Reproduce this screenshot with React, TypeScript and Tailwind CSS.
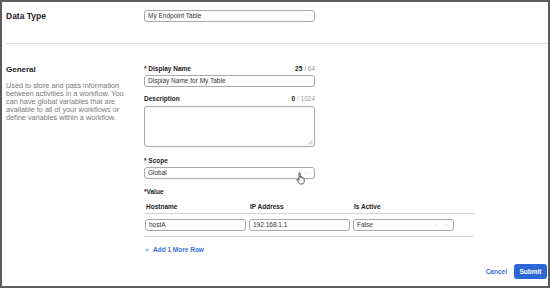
import { ChevronDown, X, Plus } from 'lucide-react';

const font = { fontFamily: '"Liberation Sans", Arial, sans-serif' };

function Label({ text, count }: { text: string; count?: [string, string] }) {
  return (
    <div className="flex h-[8px] w-[171px] items-center justify-between text-[6.5px] leading-[8px]">
      <span className="font-bold text-[#222]">{text}</span>
      {count && (
        <span className="text-[#999]">
          <span className="font-bold text-[#222]">{count[0]}</span> / {count[1]}
        </span>
      )}
    </div>
  );
}

function Select({ value, clear, className }: { value: string; clear?: boolean; className: string }) {
  return (
    <div
      className={`flex items-center justify-between rounded-[3px] border border-[#a9a9a9] bg-white pl-[3px] pr-[4px] text-[6.5px] text-[#333] ${className}`}
    >
      <span>{value}</span>
      <span className="flex items-center gap-[4px] text-[#c4c4c4]">
        {clear && <X size={5} strokeWidth={2} />}
        <ChevronDown size={6} strokeWidth={2} />
      </span>
    </div>
  );
}

function Field({ value, className }: { value: string; className: string }) {
  return (
    <div
      className={`flex items-center rounded-[3px] border border-[#a9a9a9] bg-white pl-[3px] text-[6.5px] text-[#333] ${className}`}
    >
      {value}
    </div>
  );
}

export default function App() {
  return (
    <div style={font} className="relative flex h-[288px] w-[550px] flex-col border-2 border-[#5c5c5c] bg-white">
      {/* Data type */}
      <div className="mt-[8px] flex h-[12px] items-center">
        <div className="w-[142px] pl-[4px] text-[8.5px] font-bold text-[#222]">Data Type</div>
        <Select value="My Endpoint Table" className="h-[12px] w-[171px]" />
      </div>

      <div className="ml-[4px] mt-[21px] h-px bg-[#d9d9d9]" />

      {/* General */}
      <div className="mt-[21px] flex">
        <div className="w-[142px] pl-[4px]">
          <div className="h-[10px] text-[8px] font-bold leading-[10px] text-[#222]">General</div>
          <p className="mt-[7px] w-[128px] text-[7.3px] leading-[8px] text-[#7a7a7a]">
            Used to store and pass information between activities in a workflow. You can have global variables that are available to all of your workflows or define variables within a workflow.
          </p>
        </div>

        <div className="flex flex-col">
          <Label text="* Display Name" count={['25', '64']} />
          <Field value="Display Name for My Table" className="mt-[2px] h-[12px] w-[171px]" />

          <div className="mt-[8px]">
            <Label text="Description" count={['0', '1024']} />
          </div>
          <div className="relative mt-[3px] h-[41px] w-[171px] rounded-[3px] border border-[#a9a9a9]">
            <svg className="absolute bottom-[1px] right-[1px]" width="6" height="6" viewBox="0 0 6 6">
              <path d="M5.5 1 L1 5.5 M5.5 3.5 L3.5 5.5" stroke="#999" strokeWidth="0.8" />
            </svg>
          </div>

          <div className="mt-[10px]">
            <Label text="* Scope" />
          </div>
          <Select value="Global" className="mt-[2px] h-[12px] w-[171px]" />

          <div className="mt-[9px] text-[6.5px] font-bold leading-[8px] text-[#222]">*Value</div>

          {/* Value table */}
          <div className="mt-[7px] w-[331px]">
            <div className="grid h-[11px] grid-cols-[104px_104px_1fr] items-start border-b border-[#d4d4d4] pl-[2px] text-[6.5px] font-bold leading-[8px] text-[#222]">
              <span>Hostname</span>
              <span>IP Address</span>
              <span>Is Active</span>
            </div>
            <div className="flex h-[23px] w-[329px] items-center gap-[3px] border-b border-[#d4d4d4] pl-[1px]">
              <Field value="hostA" className="h-[12px] w-[101px]" />
              <Field value="192.168.1.1" className="h-[12px] w-[101px]" />
              <Select value="False" clear className="h-[12px] w-[101px]" />
            </div>
          </div>

          <div className="mt-[8px] flex items-center gap-[3px] text-[6.5px] font-bold text-[#3a72d6]">
            <Plus size={6} strokeWidth={2} />
            <span>Add 1 More Row</span>
          </div>
        </div>
      </div>

      {/* Footer */}
      <div className="mt-auto mb-[7px] mr-[1px] flex items-center justify-end gap-[7px]">
        <span className="text-[6.5px] font-bold text-[#3a72d6]">Cancel</span>
        <button className="h-[15px] w-[33px] rounded-[3px] bg-[#2c68d5] text-[6.5px] font-bold text-white">Submit</button>
      </div>

      {/* pointer cursor */}
      <svg className="absolute left-[294px] top-[170px]" width="10" height="13" viewBox="0 0 10 13">
        <path
          d="M3 1.2 C3 0.5 4.2 0.5 4.2 1.2 L4.2 5.5 L4.4 4.6 C4.6 4 5.6 4 5.6 4.8 L5.6 5.8 C5.8 5.2 6.9 5.2 6.9 6 L6.9 6.6 C7.2 6 8.2 6.1 8.2 6.9 L8.2 9.5 C8.2 11 7.3 12 6 12 L4.8 12 C3.7 12 3.2 11.4 2.6 10.5 L1 8.2 C0.6 7.5 1.4 6.9 2 7.5 L3 8.5 Z"
          fill="white"
          stroke="#333"
          strokeWidth="0.8"
        />
      </svg>
    </div>
  );
}
